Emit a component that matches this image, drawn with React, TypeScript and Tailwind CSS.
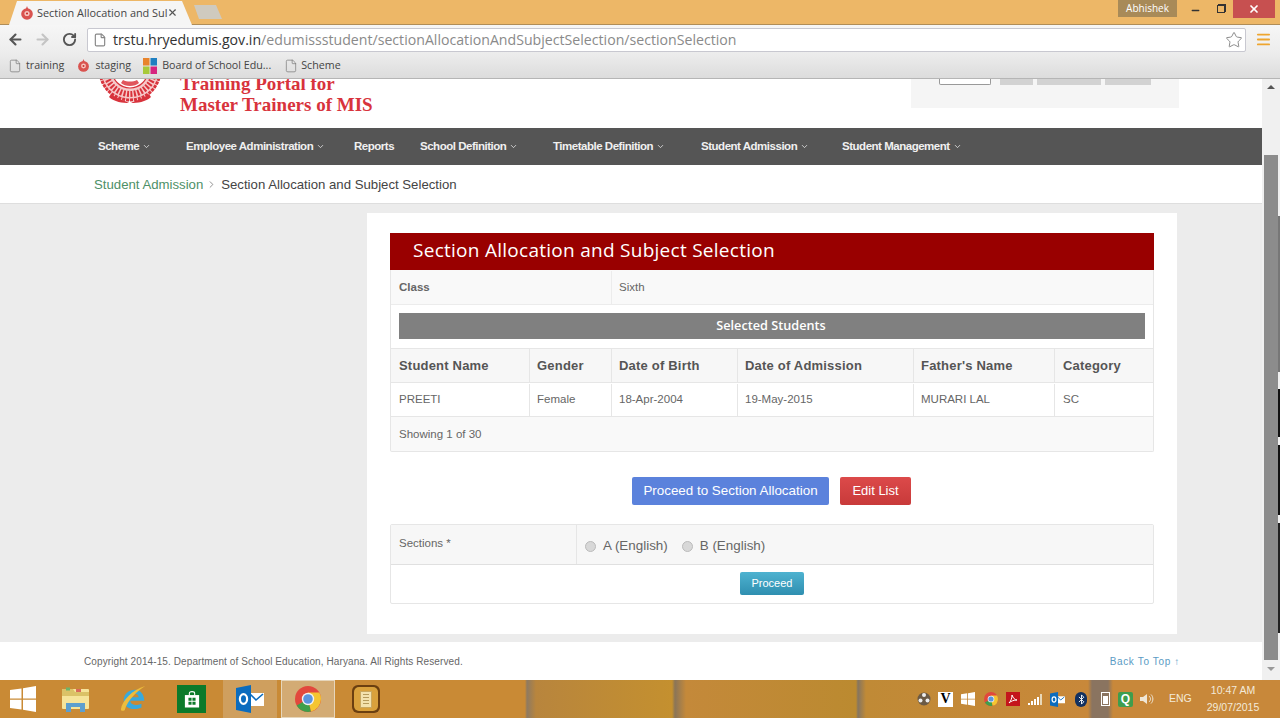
import { ArrowLeft, ArrowRight, Bluetooth, ChevronDown, ChevronRight, File, Menu, Minus, RotateCw, Star, X } from "lucide-react";

const navItems = [
  { label: "Scheme", width: "w-[88px]", caret: true },
  { label: "Employee Administration", width: "w-[168px]", caret: true },
  { label: "Reports", width: "w-[66px]", caret: false },
  { label: "School Definition", width: "w-[133px]", caret: true },
  { label: "Timetable Definition", width: "w-[148px]", caret: true },
  { label: "Student Admission", width: "w-[141px]", caret: true },
  { label: "Student Management", width: "w-[130px]", caret: true },
];

const columns = [
  { head: "Student Name", value: "PREETI", width: "w-[139px]" },
  { head: "Gender", value: "Female", width: "w-[82px]" },
  { head: "Date of Birth", value: "18-Apr-2004", width: "w-[126px]" },
  { head: "Date of Admission", value: "19-May-2015", width: "w-[176px]" },
  { head: "Father's Name", value: "MURARI LAL", width: "w-[141px]" },
  { head: "Category", value: "SC", width: "flex-1" },
];

function HaryanaFavicon({ size = 14 }: { size?: number }) {
  return (
    <svg width={size} height={size} viewBox="0 0 14 14" className="shrink-0">
      <path d="M7 0 L8.4 3.5 L5.6 3.5 Z" fill="#d9534f" />
      <circle cx="7" cy="8" r="5.8" fill="#d9534f" />
      <circle cx="7" cy="7.5" r="2.6" fill="#f6c6c0" />
      <circle cx="7" cy="7.5" r="1.1" fill="#c9302c" />
    </svg>
  );
}

function ColorTiles() {
  return (
    <svg width="14" height="16" viewBox="0 0 14 16" className="shrink-0">
      <rect x="0" y="0" width="6.5" height="7.5" fill="#e8842c" />
      <rect x="7.5" y="0" width="6.5" height="7.5" fill="#1f7fc1" />
      <rect x="0" y="8.5" width="6.5" height="7.5" fill="#a8c93a" />
      <rect x="7.5" y="8.5" width="6.5" height="7.5" fill="#d6247f" />
    </svg>
  );
}

// bottom of the round seal, the rest is scrolled away under the bookmarks bar
function Seal() {
  return (
    <svg width="66" height="25" viewBox="0 0 66 25" className="shrink-0">
      <circle cx="33" cy="-9" r="31" fill="#f6c9c9" />
      <circle cx="33" cy="-9" r="30" fill="none" stroke="#d8333c" strokeWidth="3" strokeDasharray="3 1" />
      <circle cx="33" cy="-9" r="24" fill="none" stroke="#d8333c" strokeWidth="6" strokeDasharray="2 1.5" />
      <circle cx="33" cy="-9" r="18" fill="#fff" stroke="#d8333c" strokeWidth="1.2" />
      <path d="M24 4 C28 8 38 8 42 4 L40 1 C36 3 30 3 26 1 Z" fill="#e0565c" />
      <path d="M14 15 C20 20 27 21 32 24 C26 24 17 23 12 18 Z" fill="#d8333c" />
      <path d="M52 15 C46 20 39 21 34 24 C40 24 49 23 54 18 Z" fill="#d8333c" />
    </svg>
  );
}

function WindowsLogo({ size = 26, color = "#fff" }: { size?: number; color?: string }) {
  return (
    <svg width={size} height={size} viewBox="0 0 26 26" className="shrink-0">
      <path d="M0 4 L11.5 2.4 V12.4 H0 Z M13 2.2 L26 0 V12.4 H13 Z M0 13.8 H11.5 V23.6 L0 22 Z M13 13.8 H26 V26 L13 23.8 Z" fill={color} />
    </svg>
  );
}

function ChromeLogo({ size = 26 }: { size?: number }) {
  return (
    <svg width={size} height={size} viewBox="0 0 26 26" className="shrink-0">
      <circle cx="13" cy="13" r="13" fill="#e2483d" />
      <path d="M13 13 L1.7 19.5 A13 13 0 0 0 13 26 A13 13 0 0 0 16 25.6 Z" fill="#3f9f4a" />
      <path d="M13 13 L16 25.6 A13 13 0 0 0 26 13 A13 13 0 0 0 24.3 6.5 H13 Z" fill="#f4c531" />
      <circle cx="13" cy="13" r="6.2" fill="#f2f2f2" />
      <circle cx="13" cy="13" r="4.8" fill="#5b94dc" />
    </svg>
  );
}

function ExplorerLogo() {
  return (
    <svg width="29" height="26" viewBox="0 0 29 26" className="shrink-0">
      <rect x="1" y="3" width="27" height="20" rx="1" fill="#f6e49a" />
      <path d="M1 3 H12 L14 6 H28 V10 H1 Z" fill="#dbc267" />
      <rect x="5" y="1.5" width="4" height="3" fill="#6fb36a" />
      <rect x="15" y="3" width="5" height="3" fill="#d9695a" />
      <path d="M5 26 V17 H24 V26 H19 V21 H10 V26 Z" fill="#5d9fce" />
    </svg>
  );
}

function IeLogo() {
  return (
    <svg width="28" height="28" viewBox="0 0 30 30" className="shrink-0">
      <path d="M4 16 C4 9 10 5 16 5 C22 5 26 10 26 17 H11 C11 21 16 23 23 20 V24 C14 28 4 25 4 16 Z M11 13 H20 C20 8 12 8 11 13 Z" fill="#39a9dc" />
      <path d="M1 26 C2 17 13 5 27 1 C19 6 8 16 5 27 C3 28 1 28 1 26 Z" fill="#edbd3d" />
    </svg>
  );
}

function StoreLogo() {
  return (
    <div className="flex h-[28px] w-[29px] items-center justify-center bg-[#0b7a2a]">
      <svg width="16" height="19" viewBox="0 0 18 20">
        <path d="M6 5 V3 C6 0.5 12 0.5 12 3 V5" stroke="#fff" strokeWidth="1.2" fill="none" />
        <path d="M1 5 H17 V19 H1 Z" fill="#fff" />
        <path d="M5 8 H8.5 V11.5 H5 Z M9.5 8 H13 V11.5 H9.5 Z M5 12.5 H8.5 V16 H5 Z M9.5 12.5 H13 V16 H9.5 Z" fill="#0b7a2a" />
      </svg>
    </div>
  );
}

function OutlookLogo({ size = 28 }: { size?: number }) {
  return (
    <svg width={size} height={size} viewBox="0 0 28 28" className="shrink-0">
      <rect x="13" y="8" width="15" height="13" fill="#fff" />
      <path d="M14 9 L20 15 L27 9" stroke="#0b6cbe" strokeWidth="1.6" fill="none" />
      <path d="M0 3 L15 0 V28 L0 25 Z" fill="#0b6cbe" />
      <ellipse cx="7.5" cy="14" rx="3.6" ry="4.8" fill="none" stroke="#fff" strokeWidth="2.2" />
    </svg>
  );
}

function NotesLogo() {
  return (
    <div className="flex h-[28px] w-[28px] items-center justify-center rounded-[6px] bg-[#6b3f10]">
      <div className="flex h-[24px] w-[24px] items-center justify-center rounded-[5px] bg-[#d9a13c]">
        <div className="flex h-[17px] w-[12px] flex-col justify-center gap-[2px] border border-[#c9a860] bg-[#f3e2ae] px-[2px]">
          <div className="h-px bg-[#b59a5c]" />
          <div className="h-px bg-[#b59a5c]" />
          <div className="h-px bg-[#b59a5c]" />
          <div className="h-px bg-[#b59a5c]" />
        </div>
      </div>
    </div>
  );
}

function Tray() {
  return (
    <div className="ml-[537px] flex h-full items-center">
      <svg width="14" height="16" viewBox="0 0 14 16" className="shrink-0">
        <circle cx="7" cy="8" r="6.5" fill="#6b5a45" />
        <circle cx="7" cy="4" r="2" fill="#eee" />
        <circle cx="3.5" cy="9.5" r="2" fill="#eee" />
        <circle cx="10.5" cy="9.5" r="2" fill="#eee" />
      </svg>
      <div className="ml-[7px] flex h-[15px] w-[15px] shrink-0 items-center justify-center bg-white font-['Liberation_Serif',serif] text-[14px] font-bold leading-none text-black">
        V
      </div>
      <div className="ml-[8px]">
        <WindowsLogo size={14} />
      </div>
      <div className="ml-[9px]">
        <ChromeLogo size={14} />
      </div>
      <div className="ml-[8px] flex h-[14px] w-[14px] shrink-0 items-center justify-center bg-[#c4161c]">
        <svg width="10" height="10" viewBox="0 0 10 10">
          <path d="M1 9 C3 7 4 4 4 1 C5 4 7 6 9 6 C6 6 3 7 1 9 Z" fill="none" stroke="#fff" strokeWidth="1" />
        </svg>
      </div>
      <div className="ml-[8px] flex h-[12px] items-end gap-px">
        <div className="h-[2px] w-[2px] bg-white" />
        <div className="h-[4px] w-[2px] bg-white" />
        <div className="h-[6px] w-[2px] bg-white" />
        <div className="h-[8px] w-[2px] bg-white" />
        <div className="h-[11px] w-[2px] bg-[#e8d8b8]" />
      </div>
      <div className="ml-[8px]">
        <OutlookLogo size={15} />
      </div>
      <div className="ml-[10px] flex h-[15px] w-[12px] shrink-0 items-center justify-center rounded-[6px] bg-[#12305f] text-white">
        <Bluetooth size={11} strokeWidth={2} />
      </div>
      <div className="ml-[14px] flex h-[14px] w-[9px] shrink-0 items-end border border-white p-px">
        <div className="h-[8px] w-full bg-white" />
      </div>
      <div className="ml-[8px] flex h-[15px] w-[15px] shrink-0 items-center justify-center rounded-[2px] bg-[#3f9d4d] text-[12px] font-bold leading-none text-white">
        Q
      </div>
      <svg width="14" height="12" viewBox="0 0 14 12" className="ml-[7px] shrink-0">
        <path d="M0 4 H3 L7 1 V11 L3 8 H0 Z" fill="#efe6d6" />
        <path d="M9 3 C11 5 11 7 9 9 M11 1.5 C13.5 4 13.5 8 11 10.5" stroke="#efe6d6" strokeWidth="1" fill="none" />
      </svg>
      <span className="ml-[15px] w-[22px] text-[10.5px] text-[#f3ead9]">ENG</span>
      <div className="ml-[15px] flex w-[54px] flex-col items-center whitespace-nowrap text-[10.5px] leading-[17px] text-[#f3ead9]">
        <span>10:47 AM</span>
        <span>29/07/2015</span>
      </div>
    </div>
  );
}

export default function App() {
  return (
    <div className="flex h-[718px] w-[1280px] flex-col overflow-hidden bg-white font-['Liberation_Sans',Arial,sans-serif]">
      {/* browser title bar */}
      <div className="flex h-[25px] shrink-0 items-start border-b border-[#b08d57] bg-[#edb767]">
        <div className="ml-[9px] mt-[1px] flex h-[24px] w-[183px] items-center bg-[#f5f5f5] pb-px pl-[11px] [clip-path:polygon(0_100%,8px_0,173px_0,100%_100%)]">
          <HaryanaFavicon />
          <span className="ml-[3px] w-[130px] whitespace-nowrap font-['Open_Sans',sans-serif] text-[10.9px] leading-[18px] text-[#444]">
            Section Allocation and Sul
          </span>
          <X size={11} strokeWidth={2.5} className="text-[#555]" />
        </div>
        <div className="ml-[2px] mt-[5px] h-[14px] w-[28px] bg-[#cfcabf] [clip-path:polygon(0_0,22px_0,100%_100%,5px_100%)]" />
        <div className="flex-1" />
        <div className="flex h-[17px] w-[59px] items-center justify-center bg-[#a88a58] font-['Open_Sans',sans-serif] text-[10px] text-white">
          Abhishek
        </div>
        <div className="ml-[5px] flex h-[18px] w-[27px] items-center justify-center text-[#333]">
          <Minus size={11} strokeWidth={3} className="mt-[3px]" />
        </div>
        <div className="flex h-[18px] w-[24px] items-center justify-center">
          <div className="h-[8px] w-[8px] border border-[#333] shadow-[1px_-1px_0_#333]" />
        </div>
        <div className="mr-[5px] flex h-[18px] w-[42px] items-center justify-center bg-[#c75050] text-white">
          <X size={12} strokeWidth={3.5} />
        </div>
      </div>

      {/* browser toolbar */}
      <div className="flex h-[29px] shrink-0 items-center bg-[linear-gradient(180deg,#f6f6f6,#ececec)] pl-[7px] pr-[8px]">
        <ArrowLeft size={17} strokeWidth={3} className="text-[#555]" />
        <ArrowRight size={17} strokeWidth={3} className="ml-[10px] text-[#c4c4c4]" />
        <RotateCw size={15} strokeWidth={3} className="ml-[11px] text-[#555]" />
        <div className="ml-[10px] flex h-[24px] flex-1 items-center rounded-[2px] border border-[#c8c8d0] bg-white pl-[5px] pr-[2px]">
          <File size={14} className="text-[#888]" />
          <span className="ml-[6px] font-['Open_Sans',sans-serif] text-[14.15px] text-[#333]">
            trstu.hryedumis.gov.in
            <span className="text-[#8a8a8a]">/edumissstudent/sectionAllocationAndSubjectSelection/sectionSelection</span>
          </span>
          <Star size={18} strokeWidth={1} className="ml-auto text-[#666]" />
        </div>
        <Menu size={17} strokeWidth={2.5} className="ml-[9px] text-[#eea52f]" />
      </div>

      {/* bookmarks bar */}
      <div className="flex h-[25px] shrink-0 items-center border-b border-[#b5b5b5] bg-[linear-gradient(180deg,#ececec,#dcdcdc)] pb-px pl-[8px] font-['Open_Sans',sans-serif] text-[10.7px] text-[#444]">
        <File size={14} strokeWidth={1.2} className="text-[#777]" />
        <span className="ml-[4px]">training</span>
        <div className="ml-[13px]">
          <HaryanaFavicon size={13} />
        </div>
        <span className="ml-[5px]">staging</span>
        <div className="ml-[12px]">
          <ColorTiles />
        </div>
        <span className="ml-[5px]">Board of School Edu...</span>
        <File size={14} strokeWidth={1.2} className="ml-[13px] text-[#777]" />
        <span className="ml-[3px]">Scheme</span>
      </div>

      {/* page + scrollbar */}
      <div className="flex min-h-0 flex-1">
        <div className="flex min-w-0 flex-1 flex-col">
          <header className="flex h-[49px] shrink-0 items-start overflow-hidden bg-white">
            <div className="ml-[97px]">
              <Seal />
            </div>
            <div className="ml-[17px] w-[192px] whitespace-nowrap font-['Liberation_Serif',serif] text-[19px] font-bold leading-[21px] text-[#d8333c]">
              <div className="mt-[-6px]">Training Portal for</div>
              <div>Master Trainers of MIS</div>
            </div>
            <div className="ml-[539px] flex h-[29px] w-[268px] items-start bg-[#f5f5f5] pl-[28px]">
              <div className="h-[6px] w-[52px] rounded-b-[2px] border border-t-0 border-[#999] bg-white" />
              <div className="ml-[9px] h-[6px] w-[33px] bg-[#d2d2d2]" />
              <div className="ml-[4px] h-[6px] w-[64px] bg-[#d2d2d2]" />
              <div className="ml-[4px] h-[6px] w-[46px] bg-[#d2d2d2]" />
            </div>
          </header>

          <nav className="flex h-[37px] shrink-0 items-center whitespace-nowrap bg-[#555555] pl-[98px] text-[11.5px] font-bold tracking-[-0.48px] text-[#f0f0f0]">
            {navItems.map((item) => (
              <div key={item.label} className={`flex items-center ${item.width}`}>
                <span>{item.label}</span>
                {item.caret && <ChevronDown size={9} className="ml-[3px]" />}
              </div>
            ))}
          </nav>

          <div className="flex h-[38px] shrink-0 items-center bg-white pl-[94px] pt-px text-[13.2px]">
            <span className="text-[#4d9067]">Student Admission</span>
            <ChevronRight size={11} className="ml-[3px] mr-[4px] text-[#888]" />
            <span className="text-[#444]">Section Allocation and Subject Selection</span>
          </div>

          <main className="min-h-0 flex-1 border-t border-[#dedede] bg-[#ececec] pl-[367px] pt-[9px]">
            <div className="h-[421px] w-[810px] bg-white px-[23px] pt-[20px]">
              <h1 className="flex h-[37px] items-center bg-[#990000] pb-[2px] pl-[23px] font-['Open_Sans',sans-serif] text-[19px] font-normal tracking-[0.27px] text-white">
                Section Allocation and Subject Selection
              </h1>

              <div className="rounded-b-[2px] border border-t-0 border-[#e6e6e6] bg-[#f9f9f9] text-[11.5px] text-[#666]">
                <div className="flex h-[35px] items-center border-b border-[#ececec] pt-px">
                  <div className="flex h-full w-[221px] items-center border-r border-[#ececec] pl-[8px] font-bold">Class</div>
                  <div className="pl-[7px]">Sixth</div>
                </div>
                <div className="h-[43px] bg-white px-[8px] pt-[8px]">
                  <div className="flex h-[26px] items-center justify-center bg-[#808080] pr-[2px] font-['Open_Sans',sans-serif] text-[12.7px] font-semibold text-white">
                    Selected Students
                  </div>
                </div>
                <div className="flex h-[35px] border-y border-[#e6e6e6] bg-[#f7f7f7] text-[13px] font-bold tracking-[0.2px] text-[#555]">
                  {columns.map((col) => (
                    <div key={col.head} className={`flex items-center border-r border-[#e6e6e6] pl-[7px] first:pl-[8px] last:border-r-0 last:pl-[8px] ${col.width}`}>
                      {col.head}
                    </div>
                  ))}
                </div>
                <div className="flex h-[34px] border-b border-[#e6e6e6] bg-white pt-px text-[#666]">
                  {columns.map((col) => (
                    <div key={col.head} className={`flex items-center border-r border-[#e6e6e6] pl-[7px] first:pl-[8px] last:border-r-0 last:pl-[8px] ${col.width}`}>
                      {col.value}
                    </div>
                  ))}
                </div>
                <div className="flex h-[34px] items-center pl-[8px] pt-px text-[#666]">Showing 1 of 30</div>
              </div>

              <div className="mt-[25px] flex items-center pl-[242px]">
                <button className="h-[28px] w-[197px] rounded-[2px] bg-[#5b82dc] text-[13.4px] text-white">
                  Proceed to Section Allocation
                </button>
                <button className="ml-[11px] h-[28px] w-[71px] rounded-[2px] bg-[linear-gradient(180deg,#dc4a4a,#c83a3a)] text-[13px] text-white">
                  Edit List
                </button>
              </div>

              <div className="mt-[19px] h-[80px] rounded-[2px] border border-[#e6e6e6] bg-white">
                <div className="flex h-[40px] border-b border-[#e0e0e0] bg-[#f7f7f7]">
                  <div className="flex h-full w-[186px] items-center border-r border-[#e6e6e6] pb-[2px] pl-[8px] text-[11.5px] text-[#666]">
                    Sections *
                  </div>
                  <label className="ml-[8px] flex items-center pt-[3px] text-[13.4px] text-[#666]">
                    <span className="h-[11px] w-[11px] rounded-full border border-[#bbb] bg-[#d8d8d8]" />
                    <span className="ml-[7px]">A (English)</span>
                  </label>
                  <label className="ml-[14px] flex items-center pt-[3px] text-[13.4px] text-[#666]">
                    <span className="h-[11px] w-[11px] rounded-full border border-[#bbb] bg-[#d8d8d8]" />
                    <span className="ml-[7px]">B (English)</span>
                  </label>
                </div>
                <div className="flex justify-center pt-[7px]">
                  <button className="h-[23px] w-[64px] rounded-[2px] bg-[linear-gradient(180deg,#4eb2d0,#2f8fb0)] text-[11px] text-white">
                    Proceed
                  </button>
                </div>
              </div>
            </div>
          </main>

          <footer className="flex h-[38px] shrink-0 items-center justify-between bg-white pl-[84px] pr-[82px]">
            <span className="text-[10px] tracking-[0.1px] text-[#666]">
              Copyright 2014-15. Department of School Education, Haryana. All Rights Reserved.
            </span>
            <span className="text-[10px] tracking-[0.65px] text-[#5b9bc4]">Back To Top ↑</span>
          </footer>
        </div>

        {/* scrollbar, with a sliver of the window behind it on the right edge */}
        <div className="flex h-full w-[18px] shrink-0 bg-[#f0f0f0] pl-[2px]">
          <div className="flex w-[14px] flex-col items-center">
            <div className="mt-[6px] h-0 w-0 border-x-[4px] border-b-[4px] border-x-transparent border-b-[#555]" />
            <div className="mt-[66px] h-[505px] w-[14px] bg-[#8c8c8c]" />
            <div className="mt-[7px] h-0 w-0 border-x-[4px] border-t-[4px] border-x-transparent border-t-[#999]" />
          </div>
          <div className="flex w-[2px] flex-col">
            <div className="mt-[137px] h-[156px] w-[2px] bg-[#777]" />
            <div className="mt-[17px] h-[48px] w-[2px] bg-[#111]" />
            <div className="mt-[8px] h-[70px] w-[2px] bg-[#111]" />
            <div className="mt-[8px] h-[110px] w-[2px] bg-[#222]" />
          </div>
        </div>
      </div>

      {/* windows taskbar */}
      <div className="flex h-[38px] shrink-0 items-center bg-[linear-gradient(90deg,#c98a35_0,#c98a35_525px,#8f7a60_527px,#b8853d_536px,#c4902f_672px,#8a7558_675px,#c4893a_686px,#bb8a30_856px,#857560_858px,#c08a36_866px,#c8883a_1088px,#8a7460_1092px,#8a7460_1108px,#c8883a_1113px,#c8883a_1280px)]">
        <div className="ml-[10px]">
          <WindowsLogo />
        </div>
        <div className="ml-[25px]">
          <ExplorerLogo />
        </div>
        <div className="ml-[30px]">
          <IeLogo />
        </div>
        <div className="ml-[29px]">
          <StoreLogo />
        </div>
        <div className="ml-[17px] flex h-[38px] w-[54px] items-center justify-center bg-[#cf9f5e]">
          <OutlookLogo />
        </div>
        <div className="ml-[4px] flex h-[38px] w-[54px] items-center justify-center border border-[#e6d6bc] bg-[#d3ab74]">
          <ChromeLogo />
        </div>
        <div className="ml-[17px]">
          <NotesLogo />
        </div>
        <Tray />
      </div>
    </div>
  );
}
